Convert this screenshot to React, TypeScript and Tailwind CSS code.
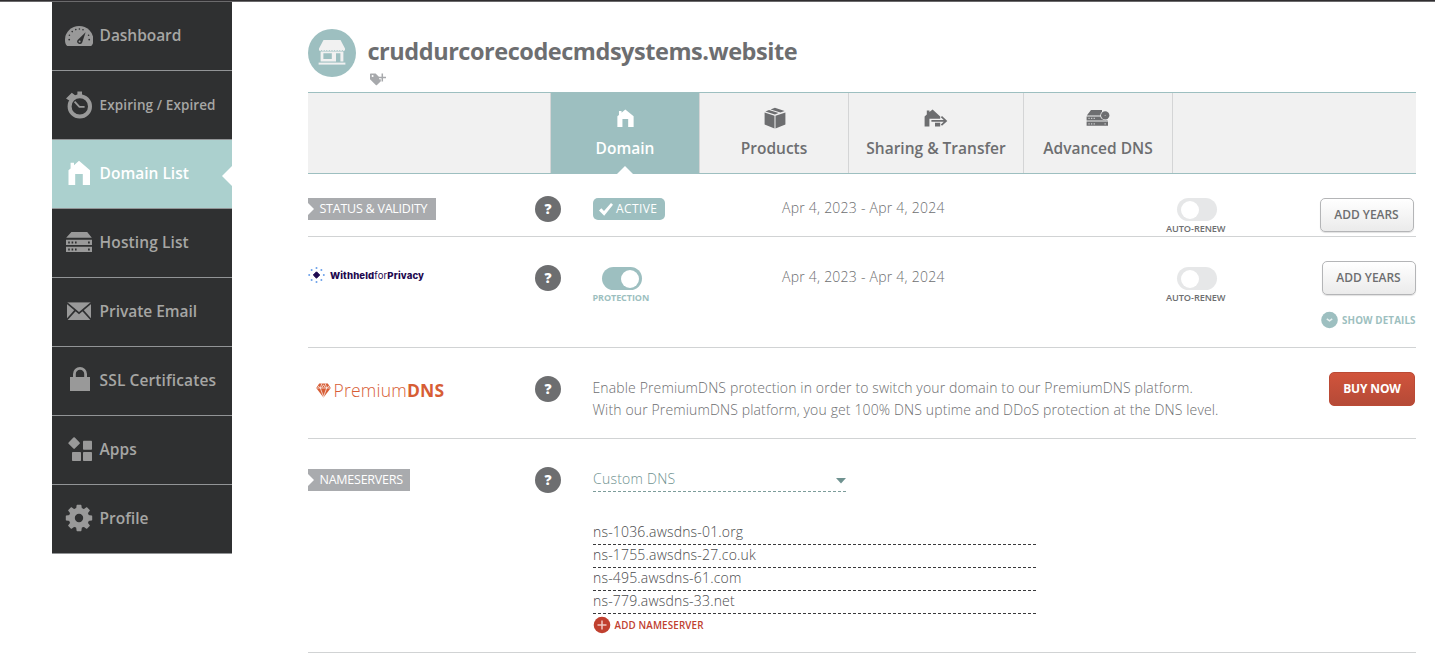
import React from "react";

type P = { children?: React.ReactNode };

const Svg = ({ w = 28, h = 28, className = "", children }: P & { w?: number; h?: number; className?: string }) => (
  <svg width={w} height={h} viewBox={`0 0 ${w} ${h}`} fill="currentColor" className={`block shrink-0 ${className}`}>
    {children}
  </svg>
);

const HOUSE = "M3.5 25V10.2L5.6 8.4V2.7H9V5.2L14 .8L25 10.2V25H17.8V14H10.2V25Z";

const DashboardIcon = () => (
  <Svg>
    <path d="M2.2 24Q0 22.6 0 18A14.2 14 0 0 1 28.4 18Q28.4 22.6 26.2 24Z" />
    <g fill="#2f3031">
      <circle cx="4.2" cy="17.6" r=".9" /><circle cx="4.4" cy="13.2" r=".8" /><circle cx="7.2" cy="9.6" r=".8" />
      <circle cx="10.8" cy="7.6" r=".8" /><circle cx="14.4" cy="7" r=".8" /><circle cx="18" cy="7.8" r=".8" />
      <circle cx="23.6" cy="13.2" r=".8" /><circle cx="24.2" cy="17.6" r=".9" />
      <path d="M20.6 10.2L17.2 20.4A2.6 2.6 0 1 1 12.6 18Z" />
    </g>
    <circle cx="14.6" cy="19.6" r="1" />
  </Svg>
);
const ClockIcon = () => (
  <Svg>
    <circle cx="14.8" cy="15.4" r="10.2" fill="none" stroke="currentColor" strokeWidth="4" />
    <path d="M12.4.4h4.6v4h-4.6zM1 7.6L6.8 1.8L10.4 4.4L4.6 9.8Z" />
    <path d="M9.6 10.6L14.4 15.8H19.6" fill="none" stroke="currentColor" strokeWidth="1.8" />
  </Svg>
);
const HouseIcon = () => <Svg><path d={HOUSE} /></Svg>;
const ServerIcon = () => (
  <Svg className="-mt-[2px]">
    <path d="M6.4 4H22.2L26.8 9.8H1.2ZM1 11.8H27V17H1ZM1 18.8H27V24H1Z" />
    <path d="M3.2 13.6h1.6v1.8H3.2zm3.4 0h1.6v1.8H6.6zm3.4 0h1.6v1.8H10zM23 13.6h1.8v1.8H23zM3.2 20.6h1.6v1.8H3.2zm3.4 0h1.6v1.8H6.6zm3.4 0h1.6v1.8H10zM23 20.6h1.8v1.8H23z" fill="#2f3031" />
  </Svg>
);
const MailIcon = () => (
  <Svg className="-mt-[2px]">
    <path d="M2 5.4H26V23H2Z" />
    <path d="M1.5 5.6L14 16.2L26.5 5.6M1.8 22.8L10.2 13.4M26.2 22.8L17.8 13.4" fill="none" stroke="#2f3031" strokeWidth="1.7" />
  </Svg>
);
const LockIcon = () => (
  <Svg className="-mt-[2px]">
    <path d="M5 11H25V25H5Z" />
    <path d="M9.4 12V8A5.6 5.6 0 0 1 20.6 8V12" fill="none" stroke="currentColor" strokeWidth="2.8" />
  </Svg>
);
const AppsIcon = () => (
  <Svg className="-mt-[2px]">
    <rect x="4.7" y="3.7" width="8.8" height="8.8" rx="1" transform="rotate(45 9.1 8.1)" />
    <rect x="18" y="5.8" width="9" height="9" rx=".7" />
    <rect x="7" y="17" width="9" height="9" rx=".7" />
    <rect x="18" y="17" width="9" height="9" rx=".7" />
  </Svg>
);
const GearIcon = () => (
  <Svg className="-mt-[2px]">
    <circle cx="14" cy="14" r="7.2" fill="none" stroke="currentColor" strokeWidth="6" />
    {[0, 45, 90, 135].map((a) => (
      <path key={a} d="M11.1 5L11.6 1.2Q11.7.8 12.1.8H15.9Q16.3.8 16.4 1.2L16.9 5ZM11.1 23L11.6 26.8Q11.7 27.2 12.1 27.2H15.9Q16.3 27.2 16.4 26.8L16.9 23Z" transform={`rotate(${a} 14 14)`} />
    ))}
  </Svg>
);

const nav = [
  { label: "Dashboard", icon: <DashboardIcon />, cls: "text-[15.5px] tracking-[-0.05px]" },
  { label: "Expiring / Expired", icon: <ClockIcon />, cls: "text-[13.5px] tracking-[0.1px]" },
  { label: "Domain List", icon: <HouseIcon />, cls: "text-[15.5px]", active: true },
  { label: "Hosting List", icon: <ServerIcon />, cls: "text-[15.5px] tracking-[0.1px]" },
  { label: "Private Email", icon: <MailIcon />, cls: "text-[15.5px] tracking-[-0.04px]" },
  { label: "SSL Certificates", icon: <LockIcon />, cls: "text-[15.5px] tracking-[0.12px]" },
  { label: "Apps", icon: <AppsIcon />, cls: "text-[15.5px]" },
  { label: "Profile", icon: <GearIcon />, cls: "text-[15.5px]" },
];

const Sidebar = () => (
  <nav className="ml-[52px] w-[180px] shrink-0">
    {nav.map((n) => (
      <div
        key={n.label}
        className={`relative flex h-[69px] items-center border-b border-[#929496] pl-[13px] ${n.active ? "bg-[#abd0ce] text-white" : "bg-[#2f3031] text-[#999999]"}`}
      >
        {n.icon}
        <span className={`ml-[6.6px] whitespace-nowrap font-semibold ${n.active ? "" : "text-[#a6a6a4]"} ${n.cls}`}>{n.label}</span>
        {n.active && (
          <Svg w={10} h={20} className="absolute right-0 top-[26px] text-white"><path d="M10 0V20L0 10Z" /></Svg>
        )}
      </div>
    ))}
  </nav>
);

const StoreIcon = () => (
  <Svg w={28} h={26} className="-mt-px text-[#f1f1f1]">
    <path d="M5.5 0H22.5L27 8.4V10Q25.6 11.8 24.4 10Q23 11.8 21.8 10Q20.4 11.8 19.2 10Q17.8 11.8 16.6 10Q15.2 11.8 14 10Q12.6 11.8 11.4 10Q10 11.8 8.8 10Q7.4 11.8 6.2 10Q5 11.8 3.6 10Q2 11.8 1 10V8.4Z" />
    <path fillRule="evenodd" d="M2.6 11.5H25.4V21.4H2.6ZM5.4 13.2V19H13.8V13.2ZM18 13.2V21.4H22.4V13.2Z" />
    <path d="M.6 22.6H27.4V24.6H.6Z" />
  </Svg>
);
const TagPlus = () => (
  <Svg w={17} h={13} className="text-[#a7a9ac]">
    <path fillRule="evenodd" d="M0 1.2Q0 .5.7.5H5.6L11.6 6.4Q12 7 11.6 7.4L7 12Q6.4 12.5 5.8 12L0 6.2ZM2.6 2A1 1 0 1 0 2.6 4A1 1 0 1 0 2.6 2Z" />
    <path d="M12.5.5V8.6M9 4.6H16" fill="none" stroke="#fff" strokeWidth="3.4" />
    <path d="M12.3.5V8.5M8.6 4.6H16" fill="none" stroke="currentColor" strokeWidth="1.5" />
  </Svg>
);
const BoxIcon = () => (
  <Svg w={22} h={22} className="ml-px">
    <path d="M.6 5.6L10.5 8.8V21.4L.6 17.6ZM21.4 5.6L11.5 8.8V21.4L21.4 17.6ZM1.4 4.4L5 3L14.6 6L10.9 7.4ZM6.6 2.4L10.9.7L20.6 3.9L16.4 5.4Z" />
  </Svg>
);
const ShareIcon = () => (
  <Svg w={24} h={18}>
    <path d="M.6 17.5V7.6L2.8 5.6V1.4H5.4V3L8.6.6L16.2 7.4V9.8H5.4V17.5ZM11 13.8H16.2V17.5H11Z" />
    <path d="M7.4 11.9H21.6M17.4 7.6L22 11.9L17.4 16.2" fill="none" stroke="currentColor" strokeWidth="1.8" />
  </Svg>
);
const DnsIcon = () => (
  <Svg w={24} h={18}>
    <path d="M5 1H16V6.4H.8ZM.6 7.4H17L22 11.4H.6ZM.6 12.6H22V16.8H.6Z" />
    <path d="M2.4 8.8h1.3V10H2.4zm2.6 0h1.3V10H5zm2.6 0h1.3V10H7.6zM2.4 14.2h1.3v1.2H2.4zm2.6 0h1.3v1.2H5zm2.6 0h1.3v1.2H7.6zM18.500 14.200h1.300v1.200h-1.300z" fill="#c9cacb" />
    <circle cx="19.200" cy="6.400" r="4.900" fill="#f1f1f1" />
    <circle cx="19.200" cy="6.400" r="4.200" />
    <circle cx="19.200" cy="6.400" r=".7" fill="#a5a6a8" />
  </Svg>
);

const Tab = ({ icon, label, cls, active }: { icon: React.ReactNode; label: string; cls: string; active?: boolean }) => (
  <div className={`relative flex h-full flex-col items-center border-r border-[#d4d5d6] ${active ? "bg-[#9dbfc0] text-white" : "text-[#6d6e70]"} ${cls}`}>
    <div className="mt-[14px] flex h-[22px] items-center justify-center">{icon}</div>
    <div className="mt-[8px] text-[15.5px] leading-[22px] font-semibold whitespace-nowrap">{label}</div>
    {active && <Svg w={16} h={8} className="absolute -bottom-px left-[66px] text-white"><path d="M0 8L8 0L16 8Z" /></Svg>}
  </div>
);

const RibbonTag = ({ children }: P) => (
  <div className="relative flex h-[22px] items-center bg-[#a9abae] pl-[11.5px] text-[12.5px] tracking-[-0.24px] whitespace-nowrap text-white">
    <Svg w={6} h={12} className="absolute top-[5px] left-0 text-white"><path d="M0 0L6 6L0 12Z" /></Svg>
    {children}
  </div>
);
const Help = ({ cls }: { cls: string }) => (
  <div className={`flex size-[26px] items-center justify-center rounded-full bg-[#6d6e70] text-[14px] leading-none font-extrabold text-white ${cls}`}>?</div>
);
const Toggle = ({ on }: { on?: boolean }) => (
  <div className={`flex h-[23px] w-10 items-center rounded-full ${on ? "justify-end bg-[#9dbfc0] pr-[3.5px]" : "bg-[#e6e7e8] pl-[3.5px]"}`}>
    <div className="size-[18px] rounded-full bg-white" />
  </div>
);
const AutoRenew = ({ cls }: { cls: string }) => (
  <div className={`flex w-[60px] flex-col items-start ${cls}`}>
    <div className="ml-[11px]"><Toggle /></div>
    <div className="mt-[2px] text-[9.2px] leading-[12px] font-semibold tracking-[-0.08px] whitespace-nowrap text-[#6d6e70]">AUTO-RENEW</div>
  </div>
);
const AddYears = () => (
  <button className="block h-[34px] w-[94px] rounded-[5px] border border-[#b4b5b7] bg-linear-to-b from-white to-[#ebebeb] pr-px text-center text-[12px] font-semibold tracking-[-0.03px] whitespace-nowrap text-[#6d6e70] shadow-[0_1px_1px_rgba(0,0,0,0.12)]">ADD YEARS</button>
);
const Dates = ({ cls }: { cls: string }) => (
  <div className={`text-[14px] leading-[22px] font-[350] tracking-[0.24px] whitespace-nowrap text-[#6d6e70] ${cls}`}>Apr 4, 2023 - Apr 4, 2024</div>
);

const row = "grid grid-cols-[227px_58px_189px_384px_154px_96px] items-start border-b border-[#d1d3d4]";

export default function App() {
  return (
    <div className="h-[655px] w-[1435px] overflow-hidden bg-white font-['Open_Sans','Noto_Sans',sans-serif]">
      <div className="h-[2px] border-b border-[#6b6a6c] bg-[#2f2d30]" />
      <div className="flex">
        <Sidebar />
        <main className="ml-[76px] w-[1108px]">
          <header className="flex h-[90px] pt-[27px]">
            <div className="flex size-12 items-center justify-center rounded-full bg-[#9dbfc0]"><StoreIcon /></div>
            <div className="ml-[11.5px]">
              <h1 className="mt-[6px] text-[23.5px] leading-[32px] font-bold tracking-[-0.46px] whitespace-nowrap text-[#6d6e70]">cruddurcorecodecmdsystems.website</h1>
              <div className="mt-[6px] ml-[2.5px]"><TagPlus /></div>
            </div>
          </header>

          <div className="flex h-[82px] border-y border-[#9dbfc0] bg-[#f1f1f1]">
            <div className="w-[243px] border-r border-[#d4d5d6]" />
            <Tab active cls="w-[149px]" label="Domain" icon={<svg width="17" height="18" viewBox="3 0 22.5 25" preserveAspectRatio="none" fill="currentColor"><path d={HOUSE} /></svg>} />
            <Tab cls="w-[149px]" label="Products" icon={<BoxIcon />} />
            <Tab cls="w-[175px]" label="Sharing &amp; Transfer" icon={<ShareIcon />} />
            <Tab cls="w-[149px]" label="Advanced DNS" icon={<DnsIcon />} />
          </div>

          <section className={`${row} h-[63px]`}>
            <div className="mt-6 flex"><div className="w-[128px]"><RibbonTag>STATUS &amp; VALIDITY</RibbonTag></div></div>
            <Help cls="mt-[22px]" />
            <div className="mt-6 flex h-[22px] w-[72px] items-center rounded-[5px] bg-[#9dbfc0] pl-[6px] text-[12px] text-white">
              <Svg w={14} h={13}><path d="M0 7.4L2.3 5.2L5 8L12 0L14 1.8L5.2 12.8Z" /></Svg>
              <span className="ml-[3px] tracking-[0.4px]">ACTIVE</span>
            </div>
            <Dates cls="mt-[23px]" />
            <AutoRenew cls="mt-6" />
            <div className="mt-6"><AddYears /></div>
          </section>

          <section className={`${row} h-[111px]`}>
            <div className="mt-[30px] flex h-4 items-center">
              <Svg w={17} h={16}>
                <path d="M8.5 4.8L11.7 8L8.5 11.2L5.3 8Z" fill="#1f0a50" stroke="#1f0a50" strokeWidth="1" strokeLinejoin="round" />
                <g fill="#6ba0ea">
                  <circle cx="8.5" cy="1" r="1" /><circle cx="8.5" cy="15" r="1" /><circle cx="1.2" cy="8" r="1" /><circle cx="15.8" cy="8" r="1" />
                  <circle cx="3.6" cy="3.1" r="1" /><circle cx="13.4" cy="3.1" r="1" /><circle cx="3.6" cy="12.9" r="1" /><circle cx="13.4" cy="12.9" r="1" />
                </g>
              </Svg>
              <span className="mt-[2px] ml-[5px] font-['Inter',sans-serif] text-[9.6px] leading-4 font-extrabold tracking-[0.12px] whitespace-nowrap text-[#1f0a50]">Withheld<span className="font-normal">for</span>Privacy</span>
            </div>
            <Help cls="mt-[28px]" />
            <div className="mt-[30px]">
              <div className="ml-[9px]"><Toggle on /></div>
              <div className="mt-[2px] -ml-[0.5px] text-[9px] leading-[12px] font-bold tracking-[-0.08px] text-[#9dbfc0]">PROTECTION</div>
            </div>
            <Dates cls="mt-[29px]" />
            <AutoRenew cls="mt-[30px]" />
            <div className="mt-6 flex flex-col items-end">
              <AddYears />
              <div className="mt-[16px] flex w-[95px] items-center">
                <Svg w={17} h={18} className="text-[#9dbfc0]"><circle cx="8.5" cy="9" r="8.3" /><path d="M5.8 7.8L8.5 9.8L11.2 7.8" fill="none" stroke="#e8f1f1" strokeWidth="1.5" /></Svg>
                <span className="mt-px ml-1 text-[9.8px] leading-[17px] font-bold tracking-[0.13px] whitespace-nowrap text-[#9dbfc0]">SHOW DETAILS</span>
              </div>
            </div>
          </section>

          <section className={`${row} h-[91px]`}>
            <div className="mt-[31px] ml-2 flex items-center text-[#d75d35]">
              <Svg w={15} h={15} className="mt-px">
                <path d="M3.2.5H11.8L14.8 5L7.5 14.6L.2 5Z" />
                <path d="M.5 5H14.5M4.3 5L7.5 13.8L10.7 5M1.8 2.8L4.3 5L5.8.5M13.2 2.8L10.7 5L9.2.5M5.8 4.6L7.5 1.8L9.2 4.6" fill="none" stroke="#fff" strokeWidth=".7" />
              </Svg>
              <span className="ml-[2.5px] text-[17.5px] leading-[22px] font-[350] tracking-[0.22px] whitespace-nowrap">Premium<span className="font-bold">DNS</span></span>
            </div>
            <Help cls="mt-[28px]" />
            <p className="col-span-3 mt-[29px] -ml-[0.5px] text-[14px] leading-[22px] font-[350] tracking-[0.135px] whitespace-nowrap text-[#6d6e70]">
              Enable PremiumDNS protection in order to switch your domain to our PremiumDNS platform.<br />
              With our PremiumDNS platform, you get 100% DNS uptime and DDoS protection at the DNS level.
            </p>
            <button className="mt-6 ml-[9px] h-[34px] w-[86px] rounded-[5px] border border-[#bb4a35] bg-linear-to-b from-[#d1543c] to-[#b54a37] text-[12px] font-bold tracking-[-0.15px] whitespace-nowrap text-white">BUY NOW</button>
          </section>

          <section className={`${row} h-[214px]`}>
            <div className="mt-[30px] flex"><div className="w-[102px]"><RibbonTag>NAMESERVERS</RibbonTag></div></div>
            <Help cls="mt-[28px]" />
            <div className="col-span-4 text-[14px] font-[350]">
              <div className="mt-[29px] flex h-[24px] w-[253px] items-start justify-between border-b border-dashed border-[#7c9c9a] leading-[22px] tracking-[0.24px] text-[#6f9290]">
                Custom DNS
                <Svg w={10} h={6} className="mt-[10px]"><path d="M0 0H10L5 5.5Z" /></Svg>
              </div>
              <div className="mt-[30px] w-[443px] tracking-[0.18px] text-[#4a4b4d]">
                {["ns-1036.awsdns-01.org", "ns-1755.awsdns-27.co.uk", "ns-495.awsdns-61.com", "ns-779.awsdns-33.net"].map((n) => (
                  <div key={n} className="h-[23px] border-b border-dashed border-[#3a3a3c] leading-[20px]">{n}</div>
                ))}
              </div>
              <div className="mt-[2px] flex h-[18px] items-center">
                <Svg w={18} h={18} className="text-[#c0402f]"><circle cx="9" cy="9" r="8.3" /><path d="M9 4.5V13.5M4.5 9H13.5" fill="none" stroke="#f0c8c2" strokeWidth="1.5" /></Svg>
                <span className="mt-px ml-[3.5px] text-[9.8px] leading-[17px] font-semibold tracking-[0.15px] whitespace-nowrap text-[#c0402f]">ADD NAMESERVER</span>
              </div>
            </div>
          </section>
        </main>
      </div>
    </div>
  );
}
